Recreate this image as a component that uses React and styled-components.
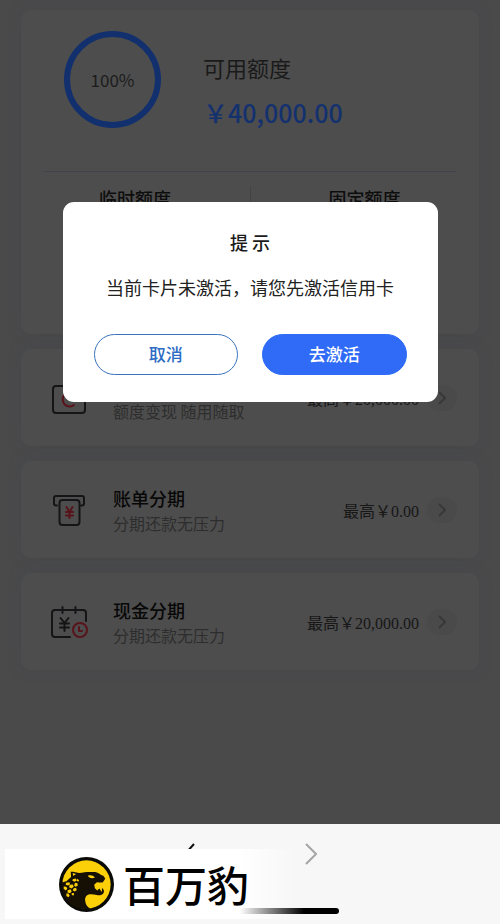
import React from "react";
import styled, { createGlobalStyle } from "styled-components";

const products = [
  {
    id: "cash",
    title: "现金提取",
    desc: "额度变现 随用随取",
    limit: "最高￥20,000.00",
    Icon: CardIcon,
  },
  {
    id: "bill",
    title: "账单分期",
    desc: "分期还款无压力",
    limit: "最高￥0.00",
    Icon: BillIcon,
  },
  {
    id: "installment",
    title: "现金分期",
    desc: "分期还款无压力",
    limit: "最高￥20,000.00",
    Icon: CalendarIcon,
  },
];

function CardIcon() {
  return (
    <IconBox viewBox="0 0 38 38">
      <rect x="2" y="7" width="32" height="27" rx="3" />
      <path className="red" d="M23 15a7 7 0 1 0 0 11" />
    </IconBox>
  );
}

function BillIcon() {
  return (
    <IconBox viewBox="0 0 38 38">
      <path d="M6 14.500H5a2 2 0 0 1-2-2V7a2 2 0 0 1 2-2h26a2 2 0 0 1 2 2v5.500a2 2 0 0 1-2 2h-1" />
      <rect x="8.500" y="9" width="20" height="25" rx="3" />
      <path className="red" d="M15.500 16l3 5 3-5M15 21h7M15 24.500h7M18.500 21v6" />
    </IconBox>
  );
}

function CalendarIcon() {
  return (
    <IconBox viewBox="0 0 38 38">
      <path d="M35 18V10a3 3 0 0 0-3-3H4a3 3 0 0 0-3 3v21a3 3 0 0 0 3 3h15" />
      <path d="M11.500 4v6M24.500 4v6" />
      <path d="M9.500 15l4 5 4-5M9 20.500h9M9 24.500h9M13.500 20v8" />
      <circle className="red" cx="29" cy="27" r="7" />
      <path className="red" d="M28 24v4h3" />
    </IconBox>
  );
}

function LeopardLogo() {
  return (
    <LogoMark viewBox="0 0 164 164" aria-hidden="true">
      <circle cx="82" cy="82" r="82" fill="#0a0a08" />
      <circle cx="82" cy="82" r="72" fill="#fcd008" />
      <path
        fill="#150f04"
        d="M8 76L22 72L36 60L35 44L42 44L60 48C75 44 95 44 108 45C118 47 120 52 132 56L138 64L134 71L130 76L112 76L105 83L107 93L114 100L120 94L128 104L128 92L133 98C136 106 132 113 122 114C112 114 104 110 92 111C82 112 77 120 78 130C79 142 84 150 94 154C60 158 30 148 17 120C9 104 8 90 8 76Z"
      />
      <path fill="#fcd008" d="M86 56C94 53 102 55 107 61C99 65 89 63 86 56ZM41 48L51 51L42 57ZM112 77L116 86L119 77Z" />
      <g fill="#fcd008">
        <path d="M21 77L31 75L33 81L27 85L20 83ZM41 66L50 64L53 69L47 74L40 71ZM54 65L60 69L57 74L53 71Z" />
        <path d="M14 88L22 89L25 95L20 100L14 95ZM32 83L41 82L44 89L37 94L30 90ZM48 77L55 78L56 86L49 89L45 84Z" />
        <path d="M26 99L34 96L38 102L33 108L25 106ZM43 94L51 92L53 99L46 103L41 99Z" />
        <path d="M22 109L28 109L32 115L28 120L22 116ZM38 107L45 108L44 115L38 113Z" />
      </g>
    </LogoMark>
  );
}

function Chevron({ left }) {
  return (
    <NavArrow viewBox="0 0 12 22" $dark={left}>
      <path d={left ? "M11 1L2 11l9 10" : "M1 1l10 10L1 21"} />
    </NavArrow>
  );
}

function App() {
  return (
    <Screen>
      <GlobalStyle />
      <Page>
        <QuotaCard>
          <QuotaTop>
            <Ring>100%</Ring>
            <Available>
              <AvailableLabel>可用额度</AvailableLabel>
              <Amount>￥40,000.00</Amount>
            </Available>
          </QuotaTop>
          <QuotaColumns>
            <QuotaName>临时额度</QuotaName>
            <QuotaName>固定额度</QuotaName>
          </QuotaColumns>
        </QuotaCard>

        {products.map(({ id, title, desc, limit, Icon }) => (
          <ProductCard key={id}>
            <Icon />
            <ProductText>
              <ProductTitle>{title}</ProductTitle>
              <ProductDesc>{desc}</ProductDesc>
            </ProductText>
            <Limit>{limit}</Limit>
            <GoButton aria-label={title}>
              <svg viewBox="0 0 8 14" width="8" height="14">
                <path d="M1 1l6 6-6 6" />
              </svg>
            </GoButton>
          </ProductCard>
        ))}

        <Overlay>
          <Dialog role="dialog" aria-labelledby="dialog-title">
            <DialogTitle id="dialog-title">提 示</DialogTitle>
            <Message>当前卡片未激活，请您先激活信用卡</Message>
            <Buttons>
              <DialogButton>取消</DialogButton>
              <DialogButton $primary>去激活</DialogButton>
            </Buttons>
          </Dialog>
        </Overlay>
      </Page>

      <BottomBar>
        <NavRow>
          <NavButton aria-label="后退">
            <Chevron left />
          </NavButton>
          <NavButton aria-label="前进">
            <Chevron />
          </NavButton>
        </NavRow>
        <Brand>
          <LeopardLogo />
          <BrandName>百万豹</BrandName>
        </Brand>
        <HomeIndicator />
      </BottomBar>
    </Screen>
  );
}

export default App;

const GlobalStyle = createGlobalStyle`
  * {
    box-sizing: border-box;
  }
  body {
    margin: 0;
    font-family: "Noto Sans CJK SC", sans-serif;
  }
  button {
    font-family: inherit;
    padding: 0;
    cursor: pointer;
  }
  h2, p {
    margin: 0;
  }
`;

const Screen = styled.div`
  display: flex;
  flex-direction: column;
  min-height: 100vh;
`;

const Page = styled.main`
  position: relative;
  flex: 1;
  display: flex;
  flex-direction: column;
  gap: 15px;
  padding: 10px 21px;
  background-color: #4a4a4b;
`;

const Card = styled.section`
  background-color: #4d4d4d;
  border-radius: 10px;
  box-shadow: 0 0 12px #47484c;
`;

const QuotaCard = styled(Card)`
  min-height: 324px;
  padding: 0 23px;
`;

const QuotaTop = styled.div`
  display: flex;
  align-items: flex-start;
  gap: 42px;
  height: 162px;
  padding: 21px 20px 0;
  border-bottom: 1px solid #41434c;
`;

const Ring = styled.div`
  display: flex;
  justify-content: center;
  align-items: center;
  flex-shrink: 0;
  width: 97px;
  height: 97px;
  border: 6px solid #122f6e;
  border-radius: 50%;
  color: #1c1c1c;
  font-size: 17px;
`;

const Available = styled.div`
  display: flex;
  flex-direction: column;
  gap: 13px;
  padding-top: 20px;
`;

const AvailableLabel = styled.span`
  color: #1a1a1a;
  font-size: 22px;
  line-height: 32px;
`;

const Amount = styled.strong`
  color: #14316f;
  font-size: 25px;
  font-weight: 500;
  line-height: 32px;
`;

const QuotaColumns = styled.div`
  display: grid;
  grid-template-columns: 1fr 1fr;
  padding-top: 14px;
`;

const QuotaName = styled.span`
  height: 80px;
  padding-right: 24px;
  color: #0d0d0d;
  font-size: 18px;
  font-weight: 500;
  line-height: 24px;
  text-align: center;

  & + & {
    padding: 0 0 0 22px;
    border-left: 1px solid #434343;
  }
`;

const ProductCard = styled(Card)`
  display: flex;
  align-items: center;
  min-height: 97px;
  padding: 0 22px 0 30px;
`;

const IconBox = styled.svg`
  flex-shrink: 0;
  width: 38px;
  height: 38px;
  fill: none;
  stroke: #151517;
  stroke-width: 2;
  stroke-linecap: round;
  stroke-linejoin: round;

  .red {
    stroke: #58131b;
  }
`;

const ProductText = styled.div`
  display: flex;
  flex-direction: column;
  flex: 1;
  padding-left: 24px;
`;

const ProductTitle = styled.span`
  color: #080808;
  font-size: 18px;
  font-weight: 500;
  line-height: 26px;
`;

const ProductDesc = styled.span`
  color: #2d2d2d;
  font-size: 16px;
  line-height: 24px;
`;

const Limit = styled.span`
  color: #171717;
  font-family: "Liberation Serif", "Noto Sans CJK SC", serif;
  font-size: 16px;
`;

const GoButton = styled.button`
  display: flex;
  justify-content: center;
  align-items: center;
  width: 30px;
  height: 26px;
  margin-left: 8px;
  border: none;
  border-radius: 13px;
  background-color: #4a4a4a;

  path {
    fill: none;
    stroke: #383838;
    stroke-width: 2;
  }
`;

const Overlay = styled.div`
  position: absolute;
  inset: 0;
  padding-top: 202px;
`;

const Dialog = styled.div`
  display: flex;
  flex-direction: column;
  align-items: center;
  width: 75%;
  min-height: 200px;
  margin: 0 auto;
  padding: 27px 31px;
  border-radius: 11px;
  background-color: #fff;
`;

const DialogTitle = styled.h2`
  color: #1a1a1a;
  font-size: 18px;
  font-weight: 500;
  line-height: 26px;
`;

const Message = styled.p`
  margin-top: 19px;
  color: #222;
  font-size: 18px;
  line-height: 26px;
  white-space: nowrap;
`;

const Buttons = styled.div`
  display: flex;
  gap: 24px;
  width: 100%;
  margin-top: 34px;
`;

const DialogButton = styled.button`
  flex: 1;
  height: 41px;
  padding-bottom: 2px;
  border: 1px solid ${({ $primary }) => ($primary ? "#2f6bf6" : "#3a72bd")};
  border-radius: 21px;
  background-color: ${({ $primary }) => ($primary ? "#2f6bf6" : "#fff")};
  color: ${({ $primary }) => ($primary ? "#fff" : "#2b6cc4")};
  font-size: 17px;
  font-weight: 500;
`;

const BottomBar = styled.footer`
  position: relative;
  height: 100px;
  background-color: #f7f7f7;
`;

const NavRow = styled.nav`
  display: flex;
  justify-content: center;
  gap: 98px;
  padding-top: 19px;
`;

const NavButton = styled.button`
  display: flex;
  justify-content: center;
  width: 24px;
  border: none;
  background: none;
`;

const NavArrow = styled.svg`
  width: 12px;
  height: 22px;
  fill: none;
  stroke: ${({ $dark }) => ($dark ? "#111" : "#a5a5a5")};
  stroke-width: 2;
`;

/* brand strip sits over the browser toolbar */
const Brand = styled.div`
  position: absolute;
  top: 25px;
  left: 5px;
  display: flex;
  align-items: center;
  gap: 9px;
  width: 290px;
  height: 70px;
  padding-left: 54px;
  background: linear-gradient(to right, #fff 80%, #f7f7f7);
`;

const LogoMark = styled.svg`
  width: 55px;
  height: 55px;
`;

const BrandName = styled.span`
  color: #000;
  font-family: "Kaiti SC", KaiTi, "Noto Sans CJK SC", serif;
  font-size: 42px;
  font-weight: 500;
  line-height: 56px;
`;

const HomeIndicator = styled.div`
  position: absolute;
  top: 84px;
  left: 240px;
  width: 99px;
  height: 6px;
  border-radius: 0 3px 3px 0;
  background: linear-gradient(to right, transparent, #000 65%);
`;
